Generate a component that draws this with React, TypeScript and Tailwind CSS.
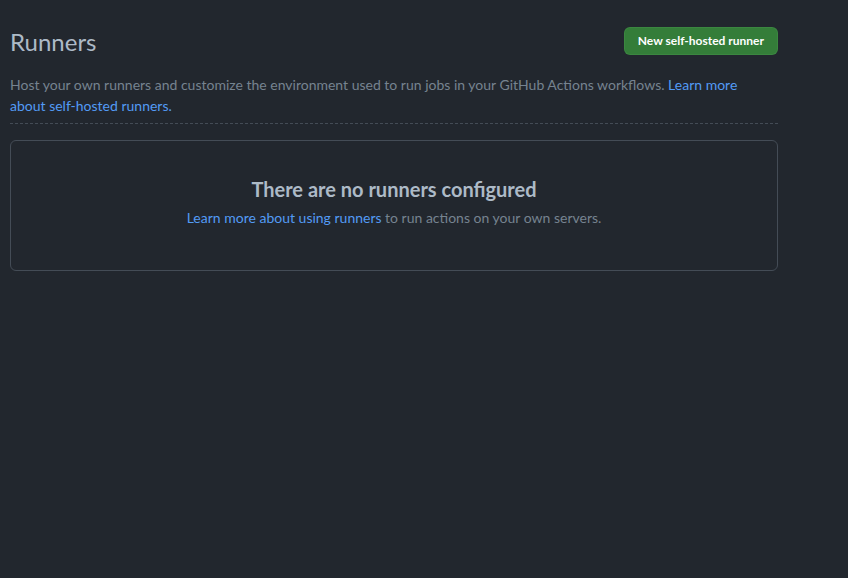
import React from "react";

export default function App() {
  return (
    <div
      className="min-h-[578px] w-full bg-[#22272e] text-[#adbac7]"
      style={{ fontFamily: 'Lato, "Noto Sans", sans-serif' }}
    >
      <div className="w-[768px] ml-[10px] pt-[26px]">
        <div className="flex items-start justify-between">
          <h1 className="text-[24px] leading-[32px] font-normal text-[#adbac7] mt-[0px]">Runners</h1>
          <button className="mt-[1px] h-[28px] px-[13px] rounded-[6px] bg-[#347d39] border border-[#46954a]/40 text-white text-[12px] font-bold leading-[20px]">
            New self-hosted runner
          </button>
        </div>
        <p className="mt-[16px] max-w-[748px] text-[14px] leading-[21px] text-[#768390]">
          Host your own runners and customize the environment used to run jobs in your GitHub Actions workflows.{" "}
          <a className="text-[#539bf5]">Learn more about self-hosted runners.</a>
        </p>
        <div className="mt-[7px] border-b border-dashed border-[#444c56]" />
        <div className="mt-[16px] h-[131px] rounded-[6px] border border-[#444c56] flex flex-col items-center pt-[34px]">
          <h3 className="text-[20px] leading-[28px] font-bold text-[#adbac7]">There are no runners configured</h3>
          <p className="mt-[4px] text-[14px] leading-[21px] text-[#768390]">
            <a className="text-[#539bf5]">Learn more about using runners</a> to run actions on your own servers.
          </p>
        </div>
      </div>
    </div>
  );
}
